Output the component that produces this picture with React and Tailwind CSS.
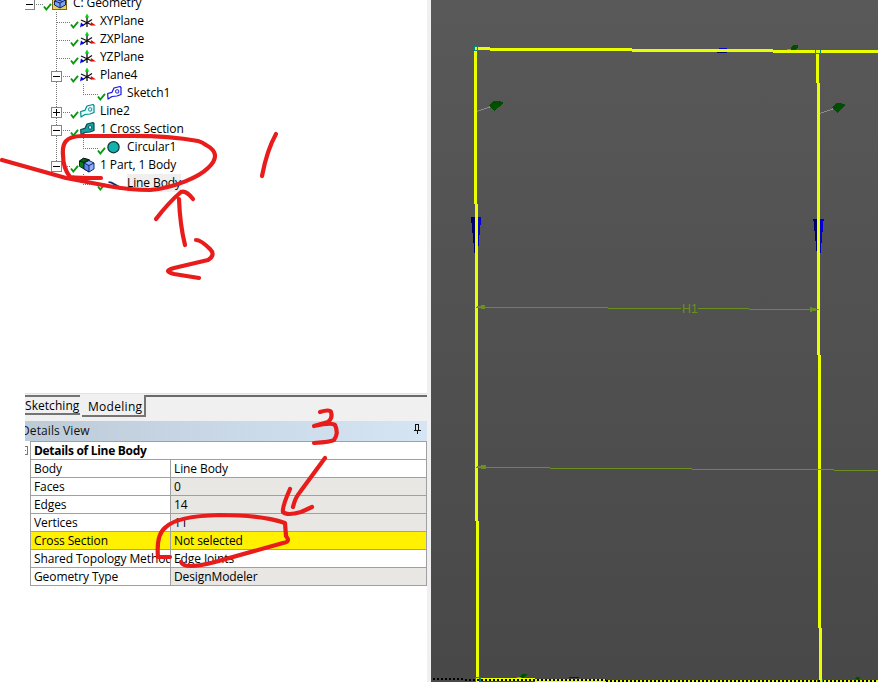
import React from "react";

const FONT = "font-['Open_Sans','Noto_Sans',sans-serif]";

function Check({ x }) {
  return <path d={`M${x} 12.5 L${x + 2.3} 15.5 L${x + 7} 9.8`} fill="none" stroke="#079a0c" strokeWidth="1.9" />;
}

function Toggle({ x, plus }) {
  return (
    <g shapeRendering="crispEdges">
      <rect x={x + 0.5} y="5.5" width="10" height="10" fill="#fff" stroke="#858585" />
      <path d={`M${x + 2} 10.5h7${plus ? ` M${x + 5.5} 7v7` : ""}`} stroke="#000" />
    </g>
  );
}

function Triad() {
  return (
    <g>
      <path d="M87 4v11 M81 8l11 5 M92 7.5L82 14" stroke="#111" strokeWidth="1.3" />
      <path d="M84.8 5.5L87 1.5l2.2 4z" fill="#00d915" />
      <path d="M91 10l5 3.5h-5.5z" fill="#f00" />
      <path d="M81 10.5l3 2.5-4 2.5z" fill="#00f" />
    </g>
  );
}

function Bracket({ x, stroke, fill, hole }) {
  return (
    <g transform={`translate(${x} 0)`} strokeLinejoin="round">
      <path d="M.7 9.5L5 8.3 7 4l6-1.5 1 1v7L10 12l-5 .5-4 2.5z" fill={fill} stroke={stroke} strokeWidth="1.2" />
      <rect x="8.7" y="5.8" width="3" height="3.2" rx=".8" fill={hole} stroke={stroke} />
    </g>
  );
}

function Icon({ kind }) {
  if (kind === "triad") return <Triad />;
  if (kind === "sketch") return <Bracket x={107} stroke="#1414e6" fill="#fff" hole="#fff" />;
  if (kind === "line") return <Bracket x={80} stroke="#008a8c" fill="#e2ffff" hole="#fff" />;
  if (kind === "section") return <Bracket x={80} stroke="#064b4e" fill="#13a5a5" hole="#e8ffff" />;
  if (kind === "circle") return <circle cx="113.5" cy="9.2" r="5.6" fill="#16b0ad" stroke="#05363a" strokeWidth="1.2" />;
  if (kind === "body") return <path d="M108.5 8.2l3 .4 9 5" fill="none" stroke="#172d6b" strokeWidth="1.8" />;
  if (kind === "part")
    return (
      <g stroke="#071b0b" strokeWidth=".9" strokeLinejoin="round">
        <path d="M79.5 5l4-2.7 6 1.5v8l-5 1.5-5-3z" fill="#078218" />
        <path d="M79.5 5l4.5 1.5 5-2.7-5.5-1.5z" fill="#0b6213" />
        <g stroke="#0a1555">
          <path d="M84 7l5-2.5L94 7v6l-5 3-5-3z" fill="#89b1ff" />
          <path d="M84 7l5 2.5v6.5l-5-3z" fill="#5b86ee" />
          <path d="M89 9.5L94 7" />
        </g>
      </g>
    );
  return (
    <g>
      <rect x="52.5" y="1.5" width="14" height="14" fill="#e9d35b" stroke="#7c6811" />
      <path d="M54.5 7l5-3 6 2v5l-5.5 3-5.5-3z" fill="#7aa2fa" stroke="#132263" />
      <path d="M54.5 7l5.5 2 5.5-3M60 9v5M57 5.5l5.5 2" fill="none" stroke="#132263" />
    </g>
  );
}

const TREE = [
  { t: "C: Geometry", level: 0, icon: "root", toggle: "minus" },
  { t: "XYPlane", level: 1, icon: "triad" },
  { t: "ZXPlane", level: 1, icon: "triad" },
  { t: "YZPlane", level: 1, icon: "triad" },
  { t: "Plane4", level: 1, icon: "triad", toggle: "minus" },
  { t: "Sketch1", level: 2, icon: "sketch" },
  { t: "Line2", level: 1, icon: "line", toggle: "plus" },
  { t: "1 Cross Section", level: 1, icon: "section", toggle: "minus" },
  { t: "Circular1", level: 2, icon: "circle" },
  { t: "1 Part, 1 Body", level: 1, icon: "part", toggle: "minus" },
  { t: "Line Body", level: 2, icon: "body", selected: true, last: true },
];
const TEXT_X = [73, 100, 127];

function TreeRow({ row }) {
  const w = TEXT_X[row.level];
  const partRow = row.icon === "part";
  return (
    <div className="flex h-[18px] items-center">
      <svg width={w} height="18" className="shrink-0 overflow-visible">
        <g stroke="#777" strokeDasharray="1 1" shapeRendering="crispEdges">
          {row.level > 0 && !row.last && <path d={`M56.5 0V${partRow ? 10 : 18}`} />}
          {row.level === 0 && <path d="M36 10.5H44" />}
          {row.level === 1 && <path d="M57 10.5H71" />}
          {row.level === 2 && <path d="M83.5 0V10.5H98" fill="none" />}
        </g>
        {row.toggle && <Toggle x={row.level === 0 ? 24 : 51} plus={row.toggle === "plus"} />}
        {row.level === 0 && <rect x="20" y="0" width="5" height="18" fill="#fff" />}
        <Check x={[44, 71, 98][row.level]} />
        <Icon kind={row.icon} />
      </svg>
      <span className={row.selected ? "h-[18px] w-[54px] bg-[#efefef]" : "h-[18px]"}>{row.t}</span>
    </div>
  );
}

const DETAILS = [
  ["Body", "Line Body", "bg-white", "bg-white"],
  ["Faces", "0", "bg-white", "bg-[#e8e7e3]"],
  ["Edges", "14", "bg-white", "bg-[#e8e7e3]"],
  ["Vertices", "11", "bg-white", "bg-[#e8e7e3]"],
  ["Cross Section", "Not selected", "bg-[#fff100]", "bg-[#fff100]"],
  ["Shared Topology Method", "Edge Joints", "bg-white", "bg-white"],
  ["Geometry Type", "DesignModeler", "bg-white", "bg-[#e8e7e3]"],
];

function DetailsPanel() {
  return (
    <section className="ml-[25px] w-[402px]">
      <div className="flex h-7 items-start border-t border-[#e3e3e3] bg-[#f0f0f0]">
        <div className="mt-px h-5 w-[55px] overflow-hidden whitespace-nowrap border-b-2 border-t-2 border-[#747474] leading-[18px] tracking-[0.05px]">
          Sketching
        </div>
        <div className="ml-[2px] mt-px h-[22px] w-16 border-b-2 border-r-2 border-[#747474] pl-[6px] leading-[23px] tracking-[0.3px]">
          Modeling
        </div>
        <div className="mt-px h-[2px] flex-1 bg-[#696969]" />
      </div>
      <div className="flex h-5 items-center justify-between overflow-hidden bg-linear-to-r from-[#bdcbd9] to-[#d6e5f4] pr-[6px]">
        <span className="-ml-1 text-[#111] tracking-[0.1px]">Details View</span>
        <svg width="8" height="12" className="-mt-1" fill="none" stroke="#111" shapeRendering="crispEdges">
          <path d="M2.5 7V1.5h3V7M1 7.5h7M4.5 8v3M5.5 2v5" />
        </svg>
      </div>
      <div className="flex">
        <svg width="5" height="145" className="shrink-0">
          <path d="M0 5.5h2.5v8H0M0 9.5h1" fill="none" stroke="#777" shapeRendering="crispEdges" />
        </svg>
        <div className="w-[397px] border-l border-t border-[#a0a0a0]">
          <div className="h-[18px] border-b border-r border-[#a0a0a0] bg-white pl-[3px] font-bold leading-[17px] tracking-[-0.3px]">
            Details of Line Body
          </div>
          {DETAILS.map(([name, value, a, b]) => (
            <div key={name} className="flex h-[18px] whitespace-nowrap border-b border-[#a0a0a0] leading-[17px]">
              <div className={`w-[140px] overflow-hidden border-r border-[#a0a0a0] pl-[3px] ${a}`}>{name}</div>
              <div className={`flex-1 border-r border-[#a0a0a0] pl-[3px] ${b}`}>{value}</div>
            </div>
          ))}
        </div>
      </div>
    </section>
  );
}

function Viewport() {
  return (
    <svg width="447" height="682" viewBox="431 0 447 682" className="shrink-0 bg-linear-to-b from-[#595959] to-[#484848]" shapeRendering="crispEdges">
      <g stroke="#8c8c8c">
        <path d="M477 111.5L491 106.5M820 113.5L834 108.5M787 49.5h4M517 677.5h4" />
      </g>
      <g fill="#004f00">
        <path d="M489 105l4-4h6l4 1v2l-9 7z" />
        <path d="M832 107l4-4h4l6 2-9 8z" />
        <path d="M791 47l3-2h4v2l-3 3h-4z" />
        <path d="M520 677l2-3h5l-1 2-3 2z" />
        <path d="M854 679l2-2h4l-1 3z" />
      </g>
      <path d="M719 48.5h8M569 677.5h10" stroke="#0000cf" />
      <path d="M717 52.5h10" stroke="#000080" />
      <g fill="#00006a">
        <path d="M471 217h4v36h-1v-10h-1v-10h-1v-10h-1z" />
        <path d="M813 219h4v32h-1v-10h-1v-10h-1v-10h-1z" />
      </g>
      <g fill="#0000d5">
        <path d="M478 217h3v8h-1v10h-1v11h-1z" />
        <path d="M820 219h4v2h-1v11h-1v11h-1v10h-1z" />
      </g>
      <path
        fill="#e9ff00"
        d="M475 47h15v3h-15z M490 48h142v3H490z M632 49h141v3H632z M773 50h105v3H773z
           M474 50h3v154h-3z M475 204h3v317h-3z M476 521h3v161h-3z
           M816 53h3v30h-3z M817 83h3v272h-3z M818 355h3v273h-3z M819 628h3v54h-3z
           M480 678h55v3h-55z M535 679h71v3h-71z M606 680h272v2H606z"
      />
      <g stroke="#000" strokeWidth="2" strokeDasharray="2 2">
        <path d="M433 679H463M465 680H606M606 681H878" />
      </g>
      <g stroke="#6b8e23">
        <path d="M476 307.5H608M608 308.5H681M698 308.5H749M749 309.5H819" />
        <path d="M476 467.5H550M550 468.5H692M692 469.5H834M834 470.5H878" />
      </g>
      <g fill="#6b8e23">
        <path d="M477 306h4v-1h4v4h-4v-1h-4zM810 307h2v1h4v3h-4v1h-2zM477 466h4v-1h5v4h-5v-1h-4z" />
      </g>
      <text x="682" y="313" fontSize="12.5" fill="#6b8e23" className="font-['Liberation_Sans',sans-serif]">H1</text>
      <g fill="none" stroke="#008b8b">
        <rect x="474.5" y="46.5" width="3" height="4" />
        <path d="M815.5 50v4M820.5 50v4M815 53.5h6M475.5 677v5M480.5 677v5M475 677.5h6M817.5 679v3M822.5 679v3" />
      </g>
    </svg>
  );
}

function Annotations() {
  return (
    <svg className="pointer-events-none absolute inset-0" width="878" height="682" fill="none" stroke="#e91c1c" strokeWidth="4.2" strokeLinecap="round" strokeLinejoin="round">
      <path d="M2 160L68 178Q108 187 140 190C172 191 210 173 214 161Q217 149 202 141Q196 134 180 132Q138 136 82 136C61 136 59 154 67 174Q69 178 74 178H101" className="hidden" />
      <path d="M2 160L66 178L108 186Q130 190 150 190C174 188 199 177 208 168Q223 154 206 145Q202 142 198 141Q165 135 120 136L82 136C65 136 62 144 63 155Q63 168 70 177Q78 178 101 178" />
      <path d="M276 134Q267 150 262 176" />
      <path d="M156 219Q169 202 181 192Q186 190 193 199M179 199Q180 225 185 245" />
      <path d="M196 240Q201 240 210 249Q216 255 208 260L174 268Q162 271 174 274L199 278" />
      <path d="M320 412Q330 409 331 412Q333 418 328 422L314 426Q332 422 335 425Q339 433 334 440Q331 442 314 443" />
      <path d="M325 458L300 492Q295 498 293 507M290 489Q282 507 283 512Q287 516 301 512L312 507" />
      <path d="M170 557H158Q156 534 166 527Q177 516 220 515Q260 515 285 523L286 536Q291 542 283 543L215 562Q184 570 181 562" />
    </svg>
  );
}

export default function App() {
  return (
    <main className={`relative flex h-[682px] w-[878px] overflow-hidden bg-white text-[12px] leading-[18px] tracking-[-0.1px] text-black ${FONT}`}>
      <div className="flex w-[427px] shrink-0 flex-col">
        <div className="h-[393px] overflow-hidden">
          <div className="-mt-[6px] whitespace-nowrap">
            {TREE.map((row) => (
              <TreeRow key={row.t} row={row} />
            ))}
          </div>
        </div>
        <DetailsPanel />
      </div>
      <div className="w-1 shrink-0 bg-[#f0f0f0]" />
      <Viewport />
      <Annotations />
    </main>
  );
}
